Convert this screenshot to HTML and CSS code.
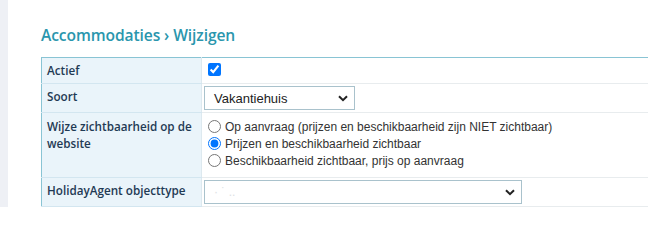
FILE: index.html
```html
<!DOCTYPE html>
<html lang="nl">
<head>
<meta charset="utf-8">
<title>Accommodaties › Wijzigen</title>
<link rel="stylesheet" href="styles.css">
</head>
<body>
<div class="layout">
  <aside class="strip"></aside>
  <main class="content">
    <h1 class="title">Accommodaties › Wijzigen</h1>
    <table class="form">
      <tr class="row-actief">
        <th>Actief</th>
        <td><input type="checkbox" checked class="check"></td>
      </tr>
      <tr class="row-soort">
        <th>Soort</th>
        <td>
          <div class="select small"><span>Vakantiehuis</span><svg class="chev" viewBox="0 0 10 7" width="10" height="7"><path d="M1 1.2 L5 5.2 L9 1.2" fill="none" stroke="#222" stroke-width="2"/></svg></div>
        </td>
      </tr>
      <tr class="row-wijze">
        <th>Wijze zichtbaarheid op de website</th>
        <td>
          <label class="radio"><input type="radio" name="z"> Op aanvraag (prijzen en beschikbaarheid zijn NIET zichtbaar)</label>
          <label class="radio"><input type="radio" name="z" checked> Prijzen en beschikbaarheid zichtbaar</label>
          <label class="radio"><input type="radio" name="z"> Beschikbaarheid zichtbaar, prijs op aanvraag</label>
        </td>
      </tr>
      <tr class="row-ha">
        <th>HolidayAgent objecttype</th>
        <td>
          <div class="select wide"><span class="faint">· ˙ ..</span><svg class="chev" viewBox="0 0 10 7" width="10" height="7"><path d="M1 1.2 L5 5.2 L9 1.2" fill="none" stroke="#222" stroke-width="2"/></svg></div>
        </td>
      </tr>
    </table>
  </main>
</div>
</body>
</html>
```

FILE: styles.css
```css
html, body {
  margin: 0;
  padding: 0;
  background: #ffffff;
  height: 207px;
  overflow: hidden;
}
.layout {
  display: flex;
  height: 207px;
  overflow: hidden;
}
.strip {
  width: 8px;
  flex: 0 0 8px;
  background: #eef0f5;
}
.content {
  flex: 1;
  padding-left: 33px;
  padding-top: 23px;
}
.title {
  margin: 0 0 10px 0;
  font-family: "Open Sans", sans-serif;
  font-weight: 600;
  font-size: 15.6px;
  line-height: 24px;
  letter-spacing: -0.1px;
  color: #2a96ad;
}
.form {
  border-collapse: collapse;
  width: 700px;
  border-top: 1px solid #89c4d4;
  border-left: 1px solid #89c4d4;
}
.form th {
  width: 150px;
  background: #eaf4fa;
  text-align: left;
  vertical-align: top;
  font-family: "Open Sans", sans-serif;
  font-weight: 600;
  font-size: 11.7px;
  line-height: 17px;
  color: #1f3a54;
  padding: 4px 4px 4px 5px;
  border-bottom: 1px solid #d3e6f0;
  border-right: 1px solid #dde9ef;
}
.form td {
  vertical-align: top;
  padding: 4px 6px 4px 6px;
  border-bottom: 1px solid #e8ecee;
  font-family: "Liberation Sans", Arial, sans-serif;
  font-size: 12px;
  color: #222;
}
.row-actief th, .row-actief td { height: 17px; }
.row-soort td { padding: 2px 6px 2px 2px; }
.check {
  margin: 1px 0 0 0;
  width: 13px;
  height: 13px;
}
.select {
  display: flex;
  align-items: center;
  justify-content: space-between;
  box-sizing: border-box;
  height: 24px;
  border: 1px solid #a9c2cc;
  padding: 0 6px 0 9px;
  font-family: "Liberation Sans", Arial, sans-serif;
  font-size: 13px;
  color: #222;
  background: #fff;
}
.select.small { width: 151px; }
.select.wide { width: 318px; }
.faint { color: #dde1e4; font-size: 12px; }
.radio {
  display: flex;
  align-items: center;
  height: 17px;
  font-size: 12px;
  color: #333;
}
.radio input {
  margin: 0 4px 0 0;
  width: 13px;
  height: 13px;
}
.row-wijze td { padding: 5px 6px 8px 6px; }
.row-wijze th { padding-top: 5px; }
.row-ha td { padding: 2px 6px 2px 2px; }
```
